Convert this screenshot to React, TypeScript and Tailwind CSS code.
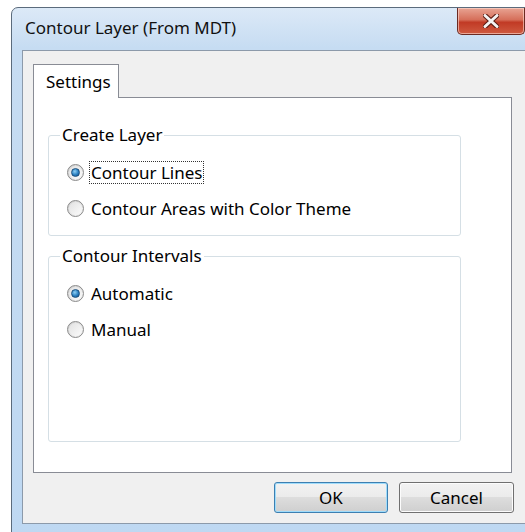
import type { ReactNode } from "react";

const FONT = "font-['Segoe_UI','Noto_Sans','Open_Sans',sans-serif]";

function Radio({ checked, label, focused }: { checked?: boolean; label: string; focused?: boolean }) {
  return (
    <div className="flex h-[36px] items-center">
      <span className="ml-[18px] flex h-[17px] w-[17px] items-center justify-center rounded-full border border-[#8a8a8a] bg-gradient-to-br from-[#cfcfcf] to-[#f8f8f8]">
        <span className="flex h-[13px] w-[13px] items-center justify-center rounded-full bg-gradient-to-br from-[#e2e2e2] to-[#fbfbfb]">
          {checked && (
            <span className="h-[9px] w-[9px] rounded-full border border-[#1c5180] bg-[radial-gradient(circle_at_40%_35%,#8ed0f5,#2a7fc0_55%,#0e4a80)]" />
          )}
        </span>
      </span>
      <span
        className={`ml-[5px] px-[2px] leading-[23px] ${
          focused ? "outline outline-1 outline-dotted outline-[#333] -outline-offset-1" : ""
        }`}
      >
        {label}
      </span>
    </div>
  );
}

function Group({ title, children, className }: { title: string; children: ReactNode; className?: string }) {
  return (
    <fieldset className={`rounded-[3px] border border-[#d5dfe5] ${className ?? ""}`}>
      <legend className="ml-[11px] px-[2px] leading-[20px]">{title}</legend>
      {children}
    </fieldset>
  );
}

function Button({ label, primary }: { label: string; primary?: boolean }) {
  return (
    <button
      className={`h-[31px] rounded-[3px] border ${
        primary ? "w-[114px] border-[#3c7fb1] shadow-[inset_0_0_0_1px_#9fdcfb]" : "w-[115px] border-[#707070] shadow-[inset_0_0_0_1px_#fcfcfc]"
      } bg-[linear-gradient(#f2f2f2_0%,#ebebeb_50%,#dddddd_50%,#cfcfcf_100%)] text-[#000]`}
    >
      {label}
    </button>
  );
}

export default function App() {
  return (
    <div className={`h-[532px] w-[525px] overflow-hidden bg-white pl-[11px] pt-[7px] text-[17px] text-black ${FONT}`}>
      <div className="flex h-[540px] w-[530px] flex-col rounded-t-[7px] border border-[#5b6b7c] bg-[linear-gradient(#dce9f7,#c6dcf2_40px,#bed8f2)] px-[10px]">
        {/* title bar */}
        <div className="flex h-[42px] items-start justify-between">
          <span className="ml-[3px] mt-[10px] leading-[20px] text-[#111]">Contour Layer (From MDT)</span>
          <div className="mr-[5px] flex h-[27px] w-[68px] items-center justify-center rounded-b-[5px] border border-t-0 border-[#6b2a22] bg-[linear-gradient(#e8a493,#d66f5a_45%,#c13a25_55%,#cf5a40)] shadow-[inset_0_0_0_1px_rgba(255,220,210,0.6)]">
            <svg width="16" height="14" viewBox="0 0 16 14">
              <path d="M2 1.5 L14 12.5 M14 1.5 L2 12.5" stroke="#5a1b12" strokeWidth="5" strokeLinecap="round" />
              <path d="M2 1.5 L14 12.5 M14 1.5 L2 12.5" stroke="#f4f4f4" strokeWidth="3" strokeLinecap="round" />
            </svg>
          </div>
        </div>

        {/* client area */}
        <div className="flex h-[474px] flex-col border border-[#8c9aaa] bg-[#f0f0f0] pl-[10px] pt-[13px]">
          <div className="flex">
            <div className="relative z-10 -mb-px flex h-[34px] w-[86px] items-center border border-b-0 border-[#898c95] bg-white pl-[12px]">
              Settings
            </div>
          </div>
          <div className="h-[376px] w-[479px] border border-[#898c95] bg-white pl-[14px] pt-[27px]">
            <Group title="Create Layer" className="h-[111px] w-[413px]">
              <div className="pt-[9px]">
                <Radio checked focused label="Contour Lines" />
                <Radio label="Contour Areas with Color Theme" />
              </div>
            </Group>
            <Group title="Contour Intervals" className="mt-[10px] h-[196px] w-[413px]">
              <div className="pt-[9px]">
                <Radio checked label="Automatic" />
                <Radio label="Manual" />
              </div>
            </Group>
          </div>
          <div className="mt-[9px] flex gap-[11px] pl-[241px]">
            <Button primary label="OK" />
            <Button label="Cancel" />
          </div>
        </div>
      </div>
    </div>
  );
}
